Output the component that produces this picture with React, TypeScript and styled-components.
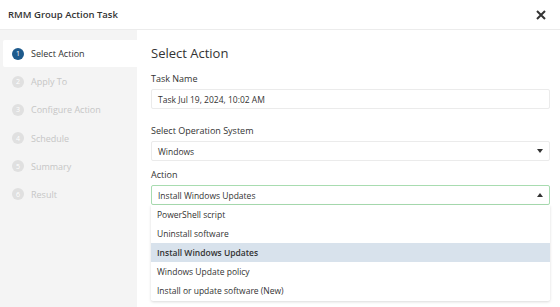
import { FC } from "react";
import styled, { createGlobalStyle } from "styled-components";

const GlobalStyle = createGlobalStyle`
  html, body {
    margin: 0;
    padding: 0;
    background: #fff;
    font-family: "Open Sans", "Liberation Sans", sans-serif;
    color: #333;
  }
`;

const steps = [
  "Select Action",
  "Apply To",
  "Configure Action",
  "Schedule",
  "Summary",
  "Result",
];

const options = [
  "PowerShell script",
  "Uninstall software",
  "Install Windows Updates",
  "Windows Update policy",
  "Install or update software (New)",
];

const Caret: FC<{ up?: boolean }> = ({ up }) => (
  <svg width="6" height="4" viewBox="0 0 6 4">
    <path d={up ? "M0 4 L3 0 L6 4 Z" : "M0 0 L3 4 L6 0 Z"} fill="#333" />
  </svg>
);

const App: FC = () => {
  return (
    <>
      <GlobalStyle />
      <Modal>
        <Header>
          <Title>RMM Group Action Task</Title>
          <Close>
            <svg width="10" height="10" viewBox="0 0 10 10">
              <path d="M1 1 L9 9 M9 1 L1 9" stroke="#333" strokeWidth="2" />
            </svg>
          </Close>
        </Header>
        <Body>
          <Sidebar>
            {steps.map((s, i) => (
              <Step key={s} active={i === 0}>
                <StepNum active={i === 0}>{i + 1}</StepNum>
                {s}
              </Step>
            ))}
          </Sidebar>
          <Content>
            <Heading>Select Action</Heading>
            <Label>Task Name</Label>
            <Input space={15}>Task Jul 19, 2024, 10:02 AM</Input>
            <Label>Select Operation System</Label>
            <Input space={7}>
              Windows
              <Caret />
            </Input>
            <Label>Action</Label>
            <SelectWrap>
              <Input focused space={0}>
                Install Windows Updates
                <Caret up />
              </Input>
              <Menu>
                {options.map((o) => (
                  <Option key={o} selected={o === "Install Windows Updates"}>
                    {o}
                  </Option>
                ))}
              </Menu>
            </SelectWrap>
          </Content>
        </Body>
      </Modal>
    </>
  );
};

export default App;

const Modal = styled.div`
  width: 560px;
  height: 307px;
  display: flex;
  flex-direction: column;
  overflow: hidden;
`;

const Header = styled.div`
  height: 29px;
  flex-shrink: 0;
  display: flex;
  align-items: center;
  justify-content: space-between;
  padding: 0 14px 0 8px;
  border-bottom: 1px solid #ececec;
`;

const Title = styled.div`
  font-size: 9.5px;
  font-weight: 600;
  color: #333;
`;

const Close = styled.div`
  display: flex;
  align-items: center;
`;

const Body = styled.div`
  flex: 1;
  display: flex;
`;

const Sidebar = styled.div`
  width: 137px;
  flex-shrink: 0;
  background: #f4f4f4;
  padding: 10px 0 0 3px;
  box-sizing: border-box;
  display: flex;
  flex-direction: column;
  gap: 1.2px;
`;

const Step = styled.div<{ active?: boolean }>`
  height: 27px;
  display: flex;
  align-items: center;
  gap: 7px;
  padding-left: 9px;
  font-size: 9px;
  color: ${(p) => (p.active ? "#333" : "#c6c6c6")};
  background: ${(p) => (p.active ? "#fff" : "transparent")};
  border-radius: 2px 0 0 2px;
`;

const StepNum = styled.span<{ active?: boolean }>`
  width: 12px;
  height: 12px;
  border-radius: 50%;
  background: ${(p) => (p.active ? "#1e5a8c" : "#e0e0e0")};
  color: #fff;
  font-size: 7px;
  display: flex;
  align-items: center;
  justify-content: center;
`;

const Content = styled.div`
  flex: 1;
  padding: 14px 10px 0 14px;
  display: flex;
  flex-direction: column;
`;

const Heading = styled.div`
  font-size: 13px;
  color: #333;
  margin-bottom: 10px;
`;

const Label = styled.div`
  font-size: 9px;
  color: #333;
  margin-bottom: 4px;
`;

const Input = styled.div<{ focused?: boolean; space: number }>`
  height: 20px;
  box-sizing: border-box;
  border: 1px solid ${(p) => (p.focused ? "#a8dcb0" : "#ebebeb")};
  border-radius: 2px;
  display: flex;
  align-items: center;
  justify-content: space-between;
  padding: 0 6px;
  font-size: 8.5px;
  color: #333;
  margin-bottom: ${(p) => p.space}px;
`;

const SelectWrap = styled.div`
  position: relative;
`;

const Menu = styled.div`
  position: absolute;
  left: 0;
  right: 0;
  top: 20px;
  background: #fff;
  box-shadow: 0 1px 3px rgba(0, 0, 0, 0.15);
  border-radius: 0 0 2px 2px;
  padding-bottom: 1px;
`;

const Option = styled.div<{ selected?: boolean }>`
  height: 19px;
  display: flex;
  align-items: center;
  padding: 0 6px;
  font-size: 8.5px;
  color: #333;
  font-weight: ${(p) => (p.selected ? 600 : 400)};
  background: ${(p) => (p.selected ? "#d8e2ec" : "#fff")};
`;
